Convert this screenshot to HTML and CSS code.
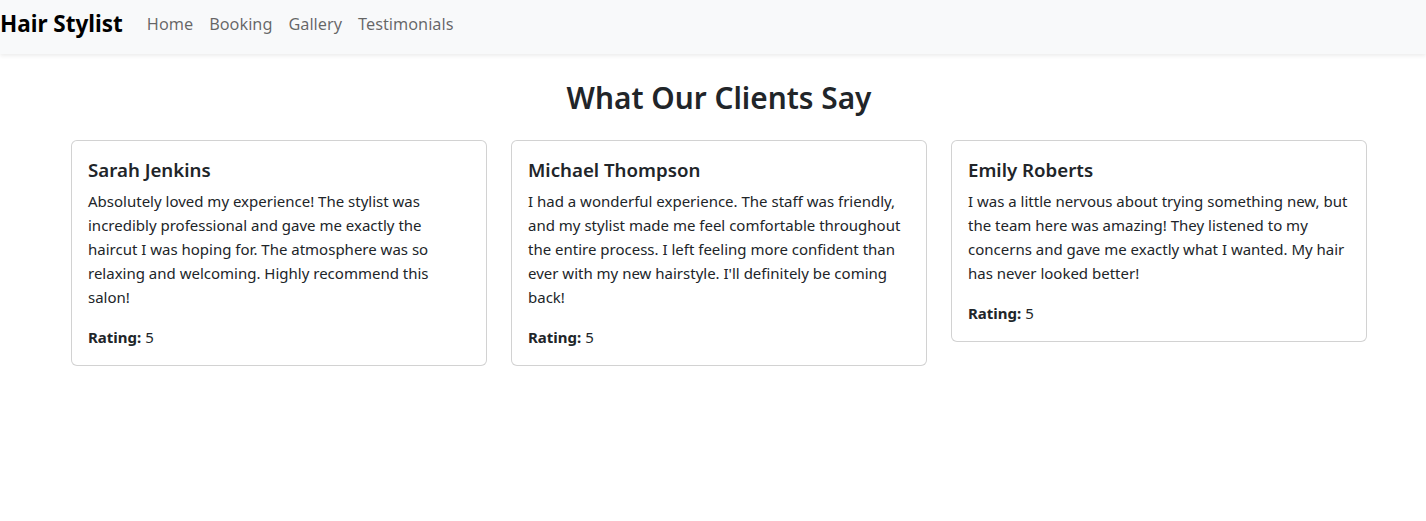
FILE: index.html
```html
<!DOCTYPE html>
<html lang="en">
<head>
<meta charset="utf-8">
<title>Hair Stylist - Testimonials</title>
<link rel="stylesheet" href="styles.css">
</head>
<body>
<nav class="navbar">
  <a class="brand" href="#">Hair Stylist</a>
  <ul class="nav-links">
    <li><a href="#">Home</a></li>
    <li><a href="#">Booking</a></li>
    <li><a href="#">Gallery</a></li>
    <li><a href="#">Testimonials</a></li>
  </ul>
</nav>
<main class="page">
  <div class="container">
    <h2 class="section-title">What Our Clients Say</h2>
    <div class="cards">
      <div class="card">
        <h5 class="card-title">Sarah Jenkins</h5>
        <p class="card-text">Absolutely loved my experience! The stylist was incredibly professional and gave me exactly the haircut I was hoping for. The atmosphere was so relaxing and welcoming. Highly recommend this salon!</p>
        <p class="rating"><strong>Rating:</strong> 5</p>
      </div>
      <div class="card">
        <h5 class="card-title">Michael Thompson</h5>
        <p class="card-text">I had a wonderful experience. The staff was friendly, and my stylist made me feel comfortable throughout the entire process. I left feeling more confident than ever with my new hairstyle. I'll definitely be coming back!</p>
        <p class="rating"><strong>Rating:</strong> 5</p>
      </div>
      <div class="card">
        <h5 class="card-title">Emily Roberts</h5>
        <p class="card-text">I was a little nervous about trying something new, but the team here was amazing! They listened to my concerns and gave me exactly what I wanted. My hair has never looked better!</p>
        <p class="rating"><strong>Rating:</strong> 5</p>
      </div>
    </div>
  </div>
</main>
</body>
</html>
```
FILE: styles.css
```css
* { box-sizing: border-box; }
html, body { margin: 0; padding: 0; }
body {
  font-family: "Noto Sans", "Open Sans", sans-serif;
  font-size: 15px;
  line-height: 24px;
  color: #212529;
  background: #fff;
}
.navbar {
  display: flex;
  align-items: center;
  height: 54px;
  padding: 0 0 6px;
  background: #f8f9fa;
  box-shadow: 0 2px 4px rgba(0, 0, 0, 0.075);
}
.brand {
  font-size: 22.5px;
  font-weight: 700;
  color: #000;
  text-decoration: none;
  margin-right: 16px;
  line-height: 30px;
}
.nav-links {
  display: flex;
  list-style: none;
  margin: 0;
  padding: 0;
}
.nav-links a {
  display: block;
  padding: 8px;
  font-size: 16.3px;
  line-height: 24px;
  color: rgba(0, 0, 0, 0.6);
  text-decoration: none;
}
.page {
  padding-left: 12px;
}
.container {
  max-width: 1296px;
  margin: 0 auto;
}
.section-title {
  margin: 25px 0 23px;
  text-align: center;
  font-size: 29.8px;
  font-weight: 600;
  line-height: 38px;
}
.cards {
  display: grid;
  grid-template-columns: repeat(3, 1fr);
  gap: 24px;
  align-items: start;
}
.card {
  border: 1px solid rgba(0, 0, 0, 0.175);
  border-radius: 6px;
  padding: 16px;
  background: #fff;
}
.card-title {
  margin: 0 0 8px;
  font-size: 18.7px;
  font-weight: 600;
  line-height: 25px;
}
.card-text {
  margin: 0 0 16px;
}
.card-title + .card-text {
  margin-top: -1px;
}
.rating {
  margin: 0;
}
.rating strong {
  font-weight: 700;
}
```
